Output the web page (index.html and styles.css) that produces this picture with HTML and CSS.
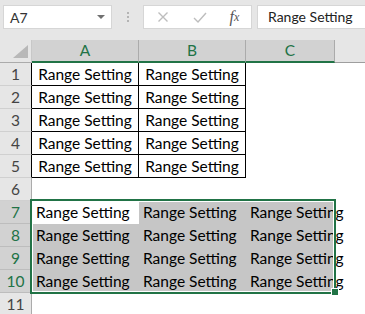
FILE: index.html
```html
<!DOCTYPE html>
<html>
<head>
<meta charset="utf-8">
<link rel="stylesheet" href="styles.css">
</head>
<body>
<div class="toolbar">
  <div class="namebox"><span class="nb-text">A7</span><span class="caret"></span></div>
  <div class="dots"><i></i><i></i><i></i></div>
  <div class="fbtns">
    <span class="ic"><svg width="12" height="12" viewBox="0 0 12 12"><path d="M1.5 1.5 L10.5 10.5 M10.5 1.5 L1.5 10.5" stroke="#bdbdbd" stroke-width="1.4" fill="none"/></svg></span>
    <span class="ic"><svg width="14" height="11" viewBox="0 0 14 11"><path d="M1 6 L5 10 L13 1" stroke="#bdbdbd" stroke-width="1.4" fill="none"/></svg></span>
    <span class="ic fx">f<span class="fxx">x</span></span>
  </div>
  <div class="formula">Range Setting</div>
</div>
<div class="sheet">
  <div class="corner"></div>
  <div class="ch">A</div><div class="ch">B</div><div class="ch">C</div><div class="chf"></div>

  <div class="rh bl">1</div><div class="c bx">Range Setting</div><div class="c bx">Range Setting</div><div class="c"></div><div class="f"></div>
  <div class="rh bl">2</div><div class="c bx">Range Setting</div><div class="c bx">Range Setting</div><div class="c"></div><div class="f"></div>
  <div class="rh bl">3</div><div class="c bx">Range Setting</div><div class="c bx">Range Setting</div><div class="c"></div><div class="f"></div>
  <div class="rh bl">4</div><div class="c bx">Range Setting</div><div class="c bx">Range Setting</div><div class="c"></div><div class="f"></div>
  <div class="rh bl">5</div><div class="c bx">Range Setting</div><div class="c bx">Range Setting</div><div class="c"></div><div class="f"></div>
  <div class="rh">6</div><div class="c"></div><div class="c"></div><div class="c"></div><div class="f"></div>
  <div class="rh sel">7</div><div class="c">Range Setting</div><div class="c g">Range Setting</div><div class="c g">Range Setting</div><div class="f"></div>
  <div class="rh sel">8</div><div class="c g">Range Setting</div><div class="c g">Range Setting</div><div class="c g">Range Setting</div><div class="f"></div>
  <div class="rh sel">9</div><div class="c g">Range Setting</div><div class="c g">Range Setting</div><div class="c g">Range Setting</div><div class="f"></div>
  <div class="rh sel">10</div><div class="c g">Range Setting</div><div class="c g">Range Setting</div><div class="c g">Range Setting</div><div class="f"></div>
  <div class="rh">11</div><div class="c"></div><div class="c"></div><div class="c"></div><div class="f"></div>

  <div class="selection"></div>
  <div class="handle"></div>
</div>
</body>
</html>
```
FILE: styles.css
```css
html, body {
  margin: 0;
  padding: 0;
  background: #e6e6e6;
  overflow: hidden;
  width: 365px;
  height: 314px;
}
body {
  font-family: Lato, "Open Sans", sans-serif;
  color: #000;
}
.toolbar {
  height: 40px;
  box-sizing: border-box;
  padding: 5px 0 0 3px;
  display: flex;
  align-items: flex-start;
}
.namebox {
  width: 109px;
  height: 24px;
  box-sizing: border-box;
  background: #fff;
  border: 1px solid #d6d6d6;
  display: flex;
  align-items: center;
  padding: 0 6px 0 6px;
  font-size: 14px;
  color: #333;
}
.nb-text { flex: 1; }
.caret {
  width: 0; height: 0;
  border-left: 4px solid transparent;
  border-right: 4px solid transparent;
  border-top: 4px solid #707070;
}
.dots {
  width: 31px;
  height: 24px;
  display: flex;
  flex-direction: column;
  align-items: center;
  justify-content: center;
  gap: 2px;
}
.dots i {
  display: block;
  width: 2px;
  height: 2px;
  background: #b4b4b4;
}
.fbtns {
  width: 109px;
  height: 24px;
  box-sizing: border-box;
  background: #fff;
  border: 1px solid #d6d6d6;
  display: grid;
  grid-template-columns: 38px 36px 33px;
  align-items: center;
  justify-items: center;
}
.ic { display: flex; align-items: center; justify-content: center; }
.fx {
  font-family: "Liberation Serif", serif;
  font-style: italic;
  font-size: 16px;
  color: #555;
  line-height: 1;
}
.fxx { font-size: 12px; }
.formula {
  flex: 1;
  margin-left: 5px;
  height: 24px;
  box-sizing: border-box;
  background: #fff;
  border: 1px solid #d6d6d6;
  border-right: none;
  padding-left: 10px;
  font-size: 14px;
  line-height: 22px;
  color: #222;
  white-space: nowrap;
}
.sheet {
  position: relative;
  display: grid;
  grid-template-columns: 32px 107px 107px 89px 1fr;
  grid-template-rows: 23px repeat(11, 23px);
  background: #fff;
  font-size: 15.5px;
}
.corner {
  background: #e6e6e6;
  border-right: 1px solid #c8c8c8;
  border-bottom: 1px solid #ababab;
  box-sizing: border-box;
  position: relative;
}
.corner::after {
  content: "";
  position: absolute;
  left: 13px;
  top: 5px;
  width: 15px;
  height: 13px;
  background: #b8b8b8;
  clip-path: polygon(100% 0, 100% 100%, 0 100%);
}
.ch {
  background: #d2d2d2;
  border-right: 1px solid #ababab;
  border-bottom: 2px solid #217346;
  box-sizing: border-box;
  color: #217346;
  text-align: center;
  line-height: 21px;
}
.chf {
  background: #e6e6e6;
  border-bottom: 1px solid #9e9e9e;
  box-sizing: border-box;
}
.rh {
  background: #e6e6e6;
  border-right: 1px solid #ababab;
  border-bottom: 1px solid #d0d0d0;
  box-sizing: border-box;
  color: #444;
  text-align: center;
  line-height: 22px;
}
.rh.bl { border-right-color: #000; }
.rh.sel {
  background: #d2d2d2;
  color: #217346;
  border-bottom-color: #bdbdbd;
}
.c {
  white-space: nowrap;
  padding-left: 4px;
  line-height: 23px;
  box-sizing: border-box;
  min-width: 0;
}
.c.bx {
  padding-left: 0;
  text-align: center;
  border-right: 1px solid #000;
  border-bottom: 1px solid #000;
  line-height: 22px;
}
.c.g { background: #c6c6c6; }
.selection {
  position: absolute;
  left: 30px;
  top: 159px;
  width: 306px;
  height: 95px;
  box-sizing: border-box;
  border: 2px solid #217346;
  box-shadow: inset 0 0 0 1px #fff;
}
.handle {
  position: absolute;
  left: 331px;
  top: 248px;
  width: 8px;
  height: 8px;
  box-sizing: border-box;
  background: #217346;
  border: 1px solid #fff;
}
```
